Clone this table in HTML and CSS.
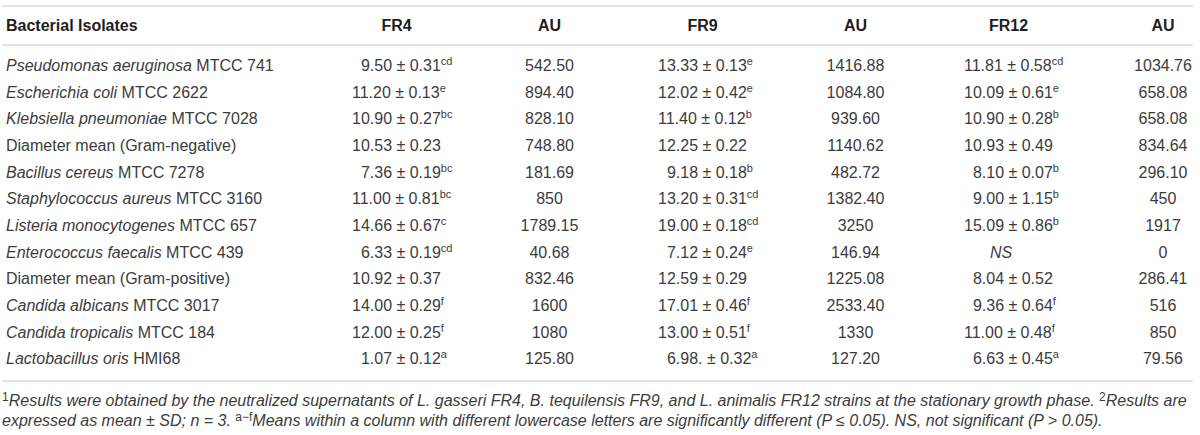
FILE: index.html
```html
<!DOCTYPE html>
<html lang="en">
<head>
<meta charset="utf-8">
<title>Antimicrobial activity</title>
<link rel="stylesheet" href="styles.css">
</head>
<body>
<div class="wrap">
  <table class="data">
    <colgroup>
      <col class="c-name"><col class="c-num"><col class="c-num"><col class="c-num"><col class="c-num"><col class="c-num"><col class="c-last">
    </colgroup>
    <thead>
      <tr>
        <th class="name">Bacterial Isolates</th>
        <th>FR4</th><th>AU</th><th>FR9</th><th>AU</th><th>FR12</th><th class="last">AU</th>
      </tr>
    </thead>
    <tbody>
      <tr><td class="name"><i>Pseudomonas aeruginosa</i> MTCC 741</td><td class="dec d1">9.50 ± 0.31<sup>cd</sup></td><td class="au">542.50</td><td class="dec">13.33 ± 0.13<sup>e</sup></td><td class="au">1416.88</td><td class="dec">11.81 ± 0.58<sup>cd</sup></td><td class="au last">1034.76</td></tr>
      <tr><td class="name"><i>Escherichia coli</i> MTCC 2622</td><td class="dec">11.20 ± 0.13<sup>e</sup></td><td class="au">894.40</td><td class="dec">12.02 ± 0.42<sup>e</sup></td><td class="au">1084.80</td><td class="dec">10.09 ± 0.61<sup>e</sup></td><td class="au last">658.08</td></tr>
      <tr><td class="name"><i>Klebsiella pneumoniae</i> MTCC 7028</td><td class="dec">10.90 ± 0.27<sup>bc</sup></td><td class="au">828.10</td><td class="dec">11.40 ± 0.12<sup>b</sup></td><td class="au">939.60</td><td class="dec">10.90 ± 0.28<sup>b</sup></td><td class="au last">658.08</td></tr>
      <tr><td class="name">Diameter mean (Gram-negative)</td><td class="dec">10.53 ± 0.23</td><td class="au">748.80</td><td class="dec">12.25 ± 0.22</td><td class="au">1140.62</td><td class="dec">10.93 ± 0.49</td><td class="au last">834.64</td></tr>
      <tr><td class="name"><i>Bacillus cereus</i> MTCC 7278</td><td class="dec d1">7.36 ± 0.19<sup>bc</sup></td><td class="au">181.69</td><td class="dec d1">9.18 ± 0.18<sup>b</sup></td><td class="au">482.72</td><td class="dec d1">8.10 ± 0.07<sup>b</sup></td><td class="au last">296.10</td></tr>
      <tr><td class="name"><i>Staphylococcus aureus</i> MTCC 3160</td><td class="dec">11.00 ± 0.81<sup>bc</sup></td><td class="au">850</td><td class="dec">13.20 ± 0.31<sup>cd</sup></td><td class="au">1382.40</td><td class="dec d1">9.00 ± 1.15<sup>b</sup></td><td class="au last">450</td></tr>
      <tr><td class="name"><i>Listeria monocytogenes</i> MTCC 657</td><td class="dec">14.66 ± 0.67<sup>c</sup></td><td class="au">1789.15</td><td class="dec">19.00 ± 0.18<sup>cd</sup></td><td class="au">3250</td><td class="dec">15.09 ± 0.86<sup>b</sup></td><td class="au last">1917</td></tr>
      <tr><td class="name"><i>Enterococcus faecalis</i> MTCC 439</td><td class="dec d1">6.33 ± 0.19<sup>cd</sup></td><td class="au">40.68</td><td class="dec d1">7.12 ± 0.24<sup>e</sup></td><td class="au">146.94</td><td class="ns"><i>NS</i></td><td class="au last">0</td></tr>
      <tr><td class="name">Diameter mean (Gram-positive)</td><td class="dec">10.92 ± 0.37</td><td class="au">832.46</td><td class="dec">12.59 ± 0.29</td><td class="au">1225.08</td><td class="dec d1">8.04 ± 0.52</td><td class="au last">286.41</td></tr>
      <tr><td class="name"><i>Candida albicans</i> MTCC 3017</td><td class="dec">14.00 ± 0.29<sup>f</sup></td><td class="au">1600</td><td class="dec">17.01 ± 0.46<sup>f</sup></td><td class="au">2533.40</td><td class="dec d1">9.36 ± 0.64<sup>f</sup></td><td class="au last">516</td></tr>
      <tr><td class="name"><i>Candida tropicalis</i> MTCC 184</td><td class="dec">12.00 ± 0.25<sup>f</sup></td><td class="au">1080</td><td class="dec">13.00 ± 0.51<sup>f</sup></td><td class="au">1330</td><td class="dec">11.00 ± 0.48<sup>f</sup></td><td class="au last">850</td></tr>
      <tr><td class="name"><i>Lactobacillus oris</i> HMI68</td><td class="dec d1">1.07 ± 0.12<sup>a</sup></td><td class="au">125.80</td><td class="dec d1">6.98. ± 0.32<sup>a</sup></td><td class="au">127.20</td><td class="dec d1">6.63 ± 0.45<sup>a</sup></td><td class="au last">79.56</td></tr>
    </tbody>
  </table>
  <p class="notes"><sup>1</sup><i>Results were obtained by the neutralized supernatants of L. gasseri FR4, B. tequilensis FR9, and L. animalis FR12 strains at the stationary growth phase. </i><sup>2</sup><i>Results are expressed as mean ± SD; n = 3. </i><sup>a−f</sup><i>Means within a column with different lowercase letters are significantly different (P ≤ 0.05). NS, not significant (P &gt; 0.05).</i></p>
</div>
</body>
</html>
```
FILE: styles.css
```css
html, body {
  margin: 0;
  padding: 0;
  background: #ffffff;
}

.wrap {
  padding: 5px 7px 0 2px;
  font-family: "Liberation Sans", Arial, sans-serif;
  color: #3c3c3c;
}

.data {
  width: 1191px;
  border-collapse: collapse;
  table-layout: fixed;
  font-size: 16px;
}

.c-name { width: 318px; }
.c-num { width: 153px; }
.c-last { width: 108px; }

.data thead th {
  height: 37px;
  padding: 0;
  font-weight: bold;
  color: #1e1e1e;
  text-align: center;
  border-top: 2px solid #e2e2e2;
  border-bottom: 2px solid #e2e2e2;
}

.data thead th.name {
  text-align: left;
  padding-left: 4px;
}

.data th.last,
.data td.last {
  padding-left: 48px;
}

.data tbody td {
  height: 26.67px;
  line-height: 26.67px;
  padding: 0;
  white-space: nowrap;
}

.data tbody tr:first-child td {
  padding-top: 7px;
}

.data tbody tr:last-child td {
  padding-bottom: 7px;
  border-bottom: 2px solid #e2e2e2;
}

.data td.name {
  padding-left: 4px;
}

.data td.dec {
  text-align: left;
  padding-left: 32px;
}

.data td.dec.d1 {
  padding-left: 40.9px;
}

.data td.au {
  text-align: center;
}

.data td.ns {
  text-align: left;
  padding-left: 58px;
}

.data sup {
  font-size: 11px;
  line-height: 0;
  vertical-align: 6px;
}

.notes {
  width: 1191px;
  margin: 9px 0 0 0;
  font-size: 16px;
  line-height: 20px;
  color: #3c3c3c;
}

.notes sup {
  font-size: 12px;
  line-height: 0;
  vertical-align: 5px;
  font-style: normal;
}
```
